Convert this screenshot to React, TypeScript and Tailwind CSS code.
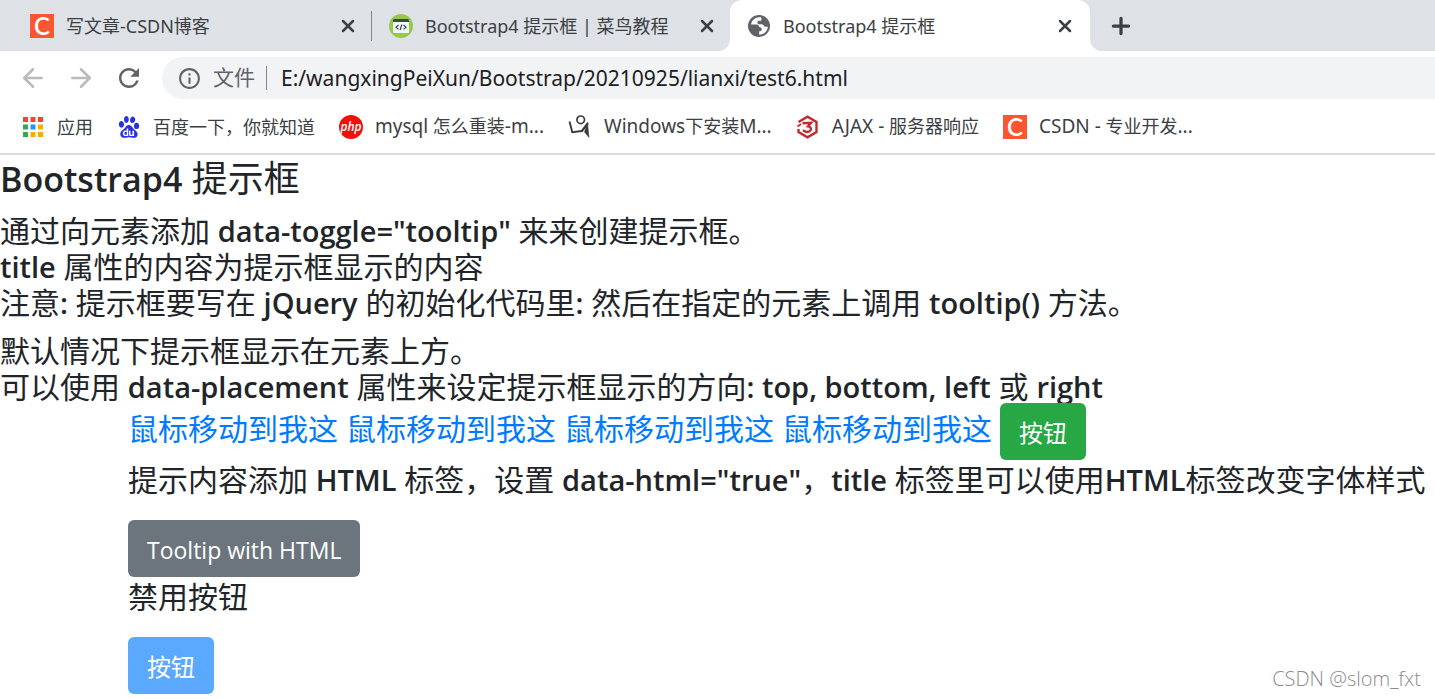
import React, { useState } from 'react'
import { ArrowLeft, ArrowRight, Plus, X } from 'lucide-react'
import { MdInfoOutline, MdRefresh } from 'react-icons/md'
import { SiBaidu } from 'react-icons/si'

const CsdnIcon = () => (
  <span className="flex size-6 shrink-0 items-center justify-center bg-[#fc5531] font-['Lato'] text-2xl font-semibold leading-6 text-white">
    C
  </span>
)

const RunoobIcon = () => (
  <svg viewBox="0 0 24 24" className="size-6 shrink-0">
    <circle cx="12" cy="12" r="12" fill="#96c94a" />
    <rect x="4" y="5" width="16" height="14" rx="1" fill="#f5f5f5" />
    <path d="M4 8V6a1 1 0 0 1 1-1h14a1 1 0 0 1 1 1v2z" fill="#34495e" />
    <path d="M9.500 11l-2.500 2.200 2.500 2.200M14.500 11l2.500 2.200-2.500 2.200M12.800 10.500l-1.600 5.500" stroke="#34495e" strokeWidth="1.200" fill="none" />
  </svg>
)

const GlobeIcon = () => (
  <svg viewBox="0 0 24 24" className="size-6 shrink-0">
    <circle cx="12" cy="12" r="11" fill="#5f6368" />
    <path
      d="M14 3.300c-4.800-1-9.500 2.500-9.900 7.200h5.400c1.800 0 2.600 1.400 2.600 2.600 1.700 0 2.700 1 2.700 2.400s-1.200 1.700-2.600 1.700v3.600c4.600 0 8.300-3.500 8.700-8h-2.700c-1.400 0-1.400-2.600-3.400-2.600h-2.700c-1 0-1.700-.8-1.700-1.800s.7-1.700 1.700-1.700h1.500c.9 0 1.300-1.700.4-3.400z"
      fill="#fff"
    />
  </svg>
)

const AppsIcon = () => (
  <svg viewBox="0 0 20 20" className="mr-0.5 size-5 shrink-0">
    <path d="M0 0h5v5H0zM7.500 0h5v5h-5zM15 0h5v5h-5z" fill="#f04438" />
    <path d="M0 7.500h5v5H0zM0 15h5v5H0z" fill="#34a853" />
    <path d="M7.500 7.500h5v5h-5z" fill="#1a9af7" />
    <path d="M15 7.500h5v5h-5zM7.500 15h5v5h-5zM15 15h5v5h-5z" fill="#f9ab00" />
  </svg>
)

const PhpIcon = () => (
  <span className="flex size-6 shrink-0 items-center justify-center rounded-full bg-[#f0100c] font-['Open_Sans'] text-xs font-semibold italic leading-5 text-white">
    php
  </span>
)

const FigureIcon = () => (
  <svg viewBox="0 0 24 24" className="size-6 shrink-0" fill="none" stroke="#3c3c3c">
    <circle cx="12.700" cy="4.800" r="3.800" strokeWidth="1.700" />
    <path d="M1.500 6.500l2.800 10.800 9.700-1.300" strokeWidth="1.900" />
    <path d="M13.500 16.500L20 8" strokeWidth="2.200" />
    <path d="M19.500 7.500l1.500 15-4.500-5.500z" strokeWidth="0.500" fill="#3c3c3c" />
  </svg>
)

const HexIcon = () => (
  <svg viewBox="0 0 24 24" className="size-6 shrink-0" fill="none" stroke="#c6282e" strokeWidth="2.400">
    <path d="M2.500 7L11.500 1.700l9 5.200v10.200l-9 5.200-9-5.200v-3" />
    <path d="M6.500 8.300l8.500-.5-3 3.600c3 .3 3.500 2.500 2.500 4-1.500 2-4.500 1.800-7.500-.2" />
    <path d="M1.500 11.500l3.500-2.500" strokeWidth="1.800" />
  </svg>
)

const tabs = [
  { title: '写文章-CSDN博客', icon: <CsdnIcon /> },
  { title: 'Bootstrap4 提示框 | 菜鸟教程', icon: <RunoobIcon /> },
]

const bookmarks = [
  { title: '百度一下，你就知道', icon: <SiBaidu size={22} color="#2932e1" className="mx-px" /> },
  { title: 'mysql 怎么重装-m...', icon: <PhpIcon /> },
  { title: 'Windows下安装M...', icon: <FigureIcon /> },
  { title: 'AJAX - 服务器响应', icon: <HexIcon /> },
  { title: 'CSDN - 专业开发...', icon: <CsdnIcon /> },
]

interface TabProps {
  title: string
  icon: React.ReactNode
}

function Tab({ title, icon }: TabProps) {
  return (
    <div className="flex h-[51px] w-[358px] items-center gap-3 pl-[17px] pr-[13px]">
      {icon}
      <span className="flex-1 truncate text-lg">{title}</span>
      <button aria-label="关闭" className="shrink-0">
        <X size={20} strokeWidth={3} />
      </button>
    </div>
  )
}

interface MixedProps {
  text: string
  latin?: string
}

// Latin runs get their own size and weight, Chinese keeps the inherited one
function Mixed({ text, latin = 'text-[29px] font-semibold' }: MixedProps) {
  return (
    <>
      {text.split(/([\x21-\x7e]+(?: [\x21-\x7e]+)*)/).map((part, i) =>
        i % 2 ? (
          <span key={i} className={latin}>
            {part}
          </span>
        ) : (
          part
        )
      )}
    </>
  )
}

export default function App() {
  const [url, setUrl] = useState('E:/wangxingPeiXun/Bootstrap/20210925/lianxi/test6.html')

  return (
    <div className="relative min-h-screen overflow-hidden bg-white pb-1 font-['Open_Sans','Noto_Sans_CJK_SC',sans-serif] text-[#212529]">
      <header className="whitespace-nowrap font-['Noto_Sans','Noto_Sans_CJK_SC',sans-serif] text-[#3c4043]">
        <div className="flex">
          <div className="flex rounded-br-xl bg-[#dee1e6] pl-[13px]">
            <Tab {...tabs[0]} />
            <span className="h-[30px] w-px self-center bg-[#80868b]" />
            <Tab {...tabs[1]} />
          </div>
          <div className="bg-[#dee1e6]">
            <div className="rounded-t-xl bg-white pr-0.5">
              <Tab title="Bootstrap4 提示框" icon={<GlobeIcon />} />
            </div>
          </div>
          <div className="flex flex-1 items-center rounded-bl-xl bg-[#dee1e6] pl-[18px]">
            <button aria-label="新标签页">
              <Plus size={26} strokeWidth={3} />
            </button>
          </div>
        </div>

        <div className="flex items-center gap-[18px] py-1.5 pl-[18px]">
          <button aria-label="后退" className="text-[#b9bbbe]">
            <ArrowLeft size={30} />
          </button>
          <button aria-label="前进" className="text-[#b9bbbe]">
            <ArrowRight size={30} />
          </button>
          <button aria-label="重新加载" className="text-[#5f6368]">
            <MdRefresh size={30} />
          </button>
          <div className="flex h-[42px] flex-1 items-center rounded-l-full bg-[#f1f3f4] pl-[15px]">
            <MdInfoOutline size={25} color="#5f6368" />
            <label htmlFor="url" className="ml-[11px] text-[21px] text-[#5f6368]">
              文件
            </label>
            <span className="ml-[11px] mr-3.5 h-6 w-px bg-[#80868b]" />
            <input
              id="url"
              value={url}
              onChange={e => setUrl(e.target.value)}
              className="flex-1 bg-transparent pt-0.5 text-[21px] text-[#202124] outline-none"
            />
          </div>
        </div>

        <nav className="flex h-12 items-center gap-6 pb-1 pl-[23px] text-lg">
          <a href="#" className="flex items-center gap-3">
            <AppsIcon />
            应用
          </a>
          {bookmarks.map(b => (
            <a key={b.title} href="#" className="flex items-center gap-3">
              {b.icon}
              <span>
                <Mixed text={b.title} latin="text-[19px]" />
              </span>
            </a>
          ))}
        </nav>
      </header>

      <main className="whitespace-nowrap border-t-2 border-[#dadce0] pt-0.5 text-3xl leading-9">
        <h3 className="mb-3 text-4xl leading-[43px]">
          <Mixed text="Bootstrap4 提示框" latin="text-[34px] font-semibold" />
        </h3>
        <h4 className="mb-3 leading-9">
          <Mixed text={'通过向元素添加 data-toggle="tooltip" 来来创建提示框。'} />
          <br />
          <Mixed text="title 属性的内容为提示框显示的内容" />
          <br />
          <Mixed text="注意: 提示框要写在 jQuery 的初始化代码里: 然后在指定的元素上调用 tooltip() 方法。" />
        </h4>
        <h4 className="leading-9">
          默认情况下提示框显示在元素上方。
          <br />
          <Mixed text="可以使用 data-placement 属性来设定提示框显示的方向: top, bottom, left 或 right" />
        </h4>

        <div className="-mt-0.5 pl-32">
          <div className="flex items-start gap-2 text-[#007bff]">
            <a href="#" className="pt-2">鼠标移动到我这</a>
            <a href="#" className="pt-2">鼠标移动到我这</a>
            <a href="#" className="pt-2">鼠标移动到我这</a>
            <a href="#" className="pt-2">鼠标移动到我这</a>
            <button className="h-[57px] rounded-md bg-[#28a745] px-[19px] pt-0.5 text-2xl text-white">按钮</button>
          </div>
          <h4 className="mt-0.5 leading-9">
            <Mixed text={'提示内容添加 HTML 标签，设置 data-html="true"，title 标签里可以使用HTML标签改变字体样式'} />
          </h4>
          <button className="mt-[22px] block h-[57px] rounded-md bg-[#6c757d] px-[19px] pt-0.5 text-[23px] text-white">
            Tooltip with HTML
          </button>
          <h4 className="mt-0.5 leading-9">禁用按钮</h4>
          <button disabled className="mt-[22px] block h-[57px] rounded-md bg-[#5aa9ff] px-[19px] pt-0.5 text-2xl text-white">
            按钮
          </button>
        </div>
      </main>

      <span className="absolute bottom-1.5 right-3.5 text-xl font-light text-[#8c8c8c]">CSDN @slom_fxt</span>
    </div>
  )
}
